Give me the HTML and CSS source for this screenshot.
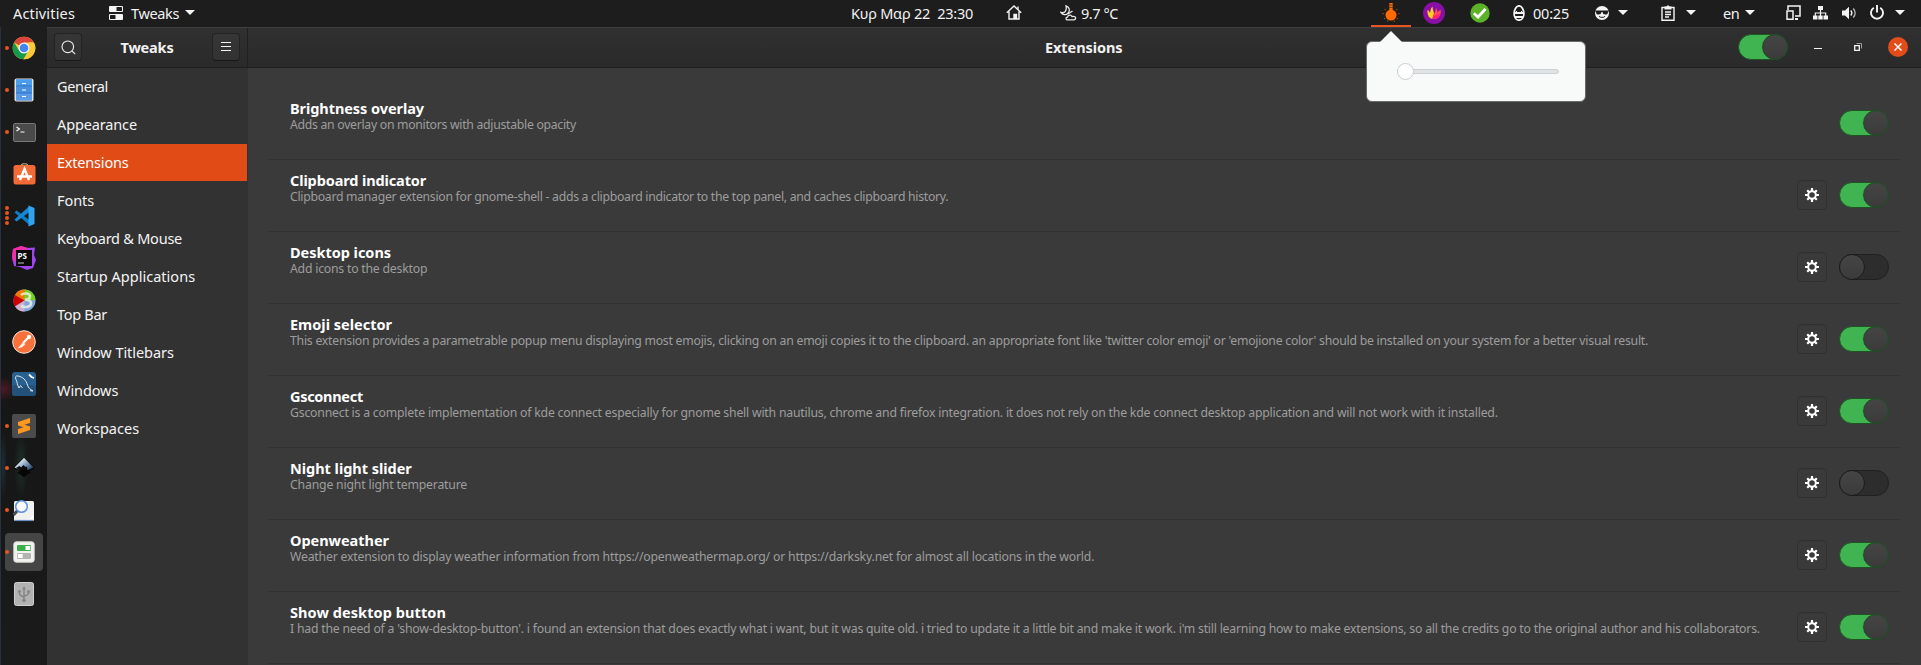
FILE: index.html
```html
<!DOCTYPE html>
<html lang="en">
<head>
<meta charset="utf-8">
<title>Tweaks</title>
<link rel="stylesheet" href="styles.css">
</head>
<body>
<svg class="defs" width="0" height="0">
  <symbol id="gear" viewBox="0 0 14 14">
    <g stroke="#fff" stroke-width="2.2"><path d="M7 0v3M7 11v3M0 7h3M11 7h3M2.2 2.2l2 2M9.8 9.8l2 2M2.2 11.8l2-2M9.8 4.2l2-2"/></g>
    <circle cx="7" cy="7" r="3.8" fill="none" stroke="#fff" stroke-width="2"/>
  </symbol>
</svg>

<header class="topbar">
  <div class="tb-left">
    <span class="activities">Activities</span>
    <svg class="ic-tweaks" width="14" height="14"><rect width="14" height="6" rx="1" fill="#f4f4f4"/><rect x="7.5" y="1" width="5.5" height="4" rx=".6" fill="#1d1d1d"/><rect y="8" width="14" height="6" rx="1" fill="#f4f4f4"/><rect x="1" y="9" width="5.5" height="4" rx=".6" fill="#1d1d1d"/></svg>
    <span class="app-name">Tweaks</span>
    <i class="caret"></i>
  </div>
  <div class="tb-mid">
    <span class="clock">Κυρ Μαρ 22&nbsp; 23:30</span>
    <svg class="ic-home" width="16" height="15" fill="none" stroke="#f4f4f4" stroke-width="1.4"><path d="M.8 7.8 8 1l7.200 6.800M3 6.500V14h10V6.500"/><path d="M12 1.500v3" /><path d="M8 14V9.500h2.500V14" fill="#f4f4f4"/></svg>
    <svg class="ic-weather" width="17" height="16" fill="none" stroke="#e8e8e8" stroke-width="1.3"><path d="M6 .8c4 1.500 4 5 2 7.500-2 2.200-5 1.700-7-.8 4 1 6-2 5-6.700z"/><path d="M7.500 14.800c-2 0-2-2.500 0-2.600.3-2.500 3.700-2.700 4.500-.6 2.500-.6 4 .5 3.600 1.900-.2.900-.8 1.300-1.800 1.300zM8 9l4.500-3"/></svg>
    <span class="temp">9.7 °C</span>
  </div>
  <div class="tb-right">
    <div class="indicator-active">
      <svg width="18" height="20" viewBox="0 0 18 20"><path d="M7.300 0h3.400v7c2.500.8 3.800 2.700 3.800 5a5.500 5.500 0 0 1-11 0c0-2.300 1.400-4.200 3.800-5z" fill="#ff6a00"/><path opacity=".55" fill="#ff6a00" d="M.5 10h1.300v1.300H.5zM16.200 10h1.300v1.300h-1.300zM2 15h1.300v1.300H2zM14.700 15H16v1.300h-1.300zM5 17.500h1.300v1.300H5zM11.700 17.500H13v1.300h-1.300zM2.500 6h1.300v1.300H2.500zM14.200 6h1.300v1.300h-1.300z"/><path d="M7 2h4M7 4.500h4" stroke="#7a3408" stroke-width=".8"/></svg>
    </div>
    <svg class="ic-purple" width="22" height="22" viewBox="0 0 22 22"><circle cx="11" cy="11" r="11" fill="#8a0fa6"/><path d="M4.500 8C6 8.500 6.500 10 7 11c.5-2 .5-4.500 2.500-6.500C9.500 7 10.500 9 11 11l-1 6C6.500 17 4 13 4.500 8z" fill="#ffcf1f"/><path d="M9.500 16.500c0-4 3-5 3.500-10.500 1.500 1.500 1.500 3 1.200 4.500C15.500 9.500 16 8.500 18 8c-.5 2.500 0 5-2.500 7.500-1.700 1.500-4 1.700-6 1z" fill="#ff4a5a"/><path d="M9 16.700c1-3 4-3.700 8-5-.5 3-3 5.800-8 5z" fill="#ff1f7c"/></svg>
    <svg class="ic-check" width="20" height="20" viewBox="0 0 20 20"><circle cx="10" cy="10" r="9.700" fill="#5cb327"/><path d="M3.800 10.300 8 14l7.500-8" fill="none" stroke="#fff" stroke-width="2.800"/></svg>
    <svg class="ic-egg" width="12" height="16" viewBox="0 0 12 16"><path d="M6 .8c3 0 4.900 4.500 4.900 8S9 15.200 6 15.200 1.100 12.300 1.100 8.800 3 .8 6 .8z" fill="none" stroke="#f4f4f4" stroke-width="1.700"/><path d="M1 8h10M2 12h8" stroke="#f4f4f4" stroke-width="1.800"/><path d="M3.500 6v2M8.500 6v2" stroke="#f4f4f4"/></svg>
    <span class="timer">00:25</span>
    <svg class="ic-ninja" width="14" height="14" viewBox="0 0 14 14"><circle cx="7" cy="7" r="7" fill="#f4f4f4"/><path d="M0 4.500h14v1h-1c0 2.500-.8 3-2.600 3S7.800 7.700 7.500 6h-1C6.200 7.700 5.400 8.500 3.600 8.500S1 8 1 5.500H0z" fill="#1d1d1d"/><path d="M4 10.500c2 1.200 4 1.200 6 0" stroke="#1d1d1d" fill="none"/></svg>
    <i class="caret c-ninja"></i>
    <svg class="ic-clip" width="14" height="16" viewBox="0 0 14 16"><path d="M1 2.500h12v12.700H1z" fill="none" stroke="#f4f4f4" stroke-width="1.400"/><path d="M3.500 1.500h2C5.500 0 8.500 0 8.500 1.500h2v3h-7z" fill="#f4f4f4"/><path d="M4 7h6M4 9.500h6M4 12h4" stroke="#f4f4f4" stroke-width="1.300"/></svg>
    <i class="caret c-clip"></i>
    <span class="lang">en</span>
    <i class="caret c-lang"></i>
    <svg class="ic-phone" width="15" height="15" viewBox="0 0 15 15" fill="none" stroke="#f4f4f4" stroke-width="1.500"><path d="M2 5V1h12v10H9"/><path d="M1 6h6v8.200H1z"/><path d="M9 14h3" stroke-width="2"/></svg>
    <svg class="ic-net" width="15" height="14" viewBox="0 0 15 14"><path d="M5 0h5v4H5zM0 9.500h4.500V13.500H0zM5.300 9.500h4.400V13.500H5.300zM10.500 9.500H15V13.500h-4.500z" fill="#f4f4f4"/><path d="M7.500 4v6M2.300 10V7h10.400v3" fill="none" stroke="#f4f4f4" stroke-width="1.200"/></svg>
    <svg class="ic-vol" width="15" height="14" viewBox="0 0 15 14"><path d="M0 4.500h3L7 .8v12.400L3 9.500H0z" fill="#f4f4f4"/><path d="M8.800 4.500c1.300 1.500 1.300 3.500 0 5" fill="none" stroke="#f4f4f4" stroke-width="1.300"/><path d="M11.200 2.500c2.600 2.600 2.600 6.400 0 9" fill="none" stroke="#bbb" stroke-width="1.300"/></svg>
    <svg class="ic-power" width="14" height="15" viewBox="0 0 14 15"><path d="M3.800 2.700a6 6 0 1 0 6.400 0M7 0v7.500" fill="none" stroke="#f4f4f4" stroke-width="1.900"/></svg>
    <i class="caret c-power"></i>
  </div>
</header>

<div class="desktop">
  <nav class="dock">
    <div class="app"><i class="dot"></i>
      <svg width="24" height="24" viewBox="0 0 24 24"><circle cx="12" cy="12" r="11.300" fill="#fbc934"/><path d="M12 12 2.200 6.400A11.300 11.300 0 0 1 21.800 6.400H12z" fill="#d9453a"/><path d="M2.200 6.400A11.300 11.300 0 0 0 11.500 23.300L16.500 14.700 7 14.600z" fill="#14994d"/><path d="M11.500 23.300 16.800 14.400V6.400h5A11.300 11.300 0 0 1 11.500 23.300z" fill="#fbc934"/><circle cx="12" cy="12" r="5.500" fill="#f5f5f5"/><circle cx="12" cy="12" r="4.300" fill="#4384f3"/></svg></div>
    <div class="app"><i class="dot"></i>
      <svg width="20" height="24" viewBox="0 0 20 24"><rect x=".5" y=".5" width="19" height="23" rx="2" fill="#e9e4dc"/><rect x="2" y="1.500" width="16" height="21" fill="#2f74c9"/><path d="M2 1.500h16v6H2z" fill="#4a9cec"/><path d="M2 8.500h16v6H2z" fill="#4790e2"/><path d="M2 15.500h16v6.500H2z" fill="#5a9be8"/><path d="M8 5.500h4M8 12h4M8 18.500h4" stroke="#fff"/></svg></div>
    <div class="app"><i class="dot"></i>
      <svg width="23" height="19" viewBox="0 0 23 19"><rect x=".5" y=".5" width="22" height="18" rx="1.500" fill="#4a4a4a" stroke="#777"/><path d="m3.500 4 3 2-3 2M7.500 9h4" fill="none" stroke="#fff" stroke-width="1.100"/></svg></div>
    <div class="app">
      <svg width="23" height="22" viewBox="0 0 23 22"><path d="M7.500 3c0-3 8-3 8 0" fill="none" stroke="#d8c8a0"/><rect x=".5" y="2" width="22" height="19.500" rx="2.500" fill="#f26a35"/><path d="m7 17 4.500-11L16 17M4 13.500h15" fill="none" stroke="#fff" stroke-width="2.400"/></svg></div>
    <div class="app"><span class="dots"><i></i><i></i><i></i><i></i></span>
      <svg width="22" height="22" viewBox="0 0 22 22"><path d="m1.500 7.500 15 12.500V15L3.500 5.500z" fill="#0c7cc4"/><path d="m1.500 14.500 2 2L16.500 7V1z" fill="#1787d2"/><path d="M15.500.5 21.500 3v16l-6 2.500z" fill="#2ea5ee"/></svg></div>
    <div class="app">
      <svg width="24" height="24" viewBox="0 0 24 24"><path d="M1 3 9 0l6 2 8-.5L22 9l2 5-3 8-6 2-7-3-6-1L0 12z" fill="#a046f0"/><path d="M1 3 9 0l7 2-4 5-10 9L0 10z" fill="#f12fa3"/><rect x="4" y="4" width="16" height="16" fill="#0b0b0b"/><path d="M6 17h6" stroke="#999" stroke-width="1.300"/><text class="ps" x="5.500" y="12.500">PS</text></svg></div>
    <div class="app">
      <svg width="23" height="23" viewBox="0 0 23 23"><circle cx="11.500" cy="11.500" r="11" fill="#7ea6d8"/><path d="M11.500 11.500 2 6A11 11 0 0 1 12 .5z" fill="#f57900"/><path d="M11.500 11.500 12 .5A11 11 0 0 1 22.500 11z" fill="#73d216"/><path d="M11.500 11.500 2 17.500a11 11 0 0 1 0-11.500z" fill="#cc0000"/><path d="M11.500 11.500V22.500A11 11 0 0 1 2 17.500z" fill="#cdafd0"/><path d="M8 6c3-2.500 9-1.800 9 1.200 0 2-2 3.200-5 3.400 3.500 0 6 1.500 6 4 0 3.500-6 4.500-10 2" fill="none" stroke="#eef3e8" stroke-width="2.600" opacity=".8"/></svg></div>
    <div class="app">
      <svg width="24" height="24" viewBox="0 0 24 24"><circle cx="12" cy="12" r="11.300" fill="#f9713a" stroke="#f4e4dc"/><path d="m5.500 18.500 5.500-6 2.500 1.500-3 3z" fill="#fff" opacity=".9"/><path d="m11 13 5-5" stroke="#fff" stroke-width="2.200"/><circle cx="17" cy="7" r="2.200" fill="#fff"/></svg></div>
    <div class="app">
      <svg width="24" height="24" viewBox="0 0 24 24"><rect width="24" height="24" rx="3" fill="#28608f"/><rect y="13" width="24" height="11" rx="3" fill="#22527a"/><path d="M7 16C5 13 5.500 10 4 7.500 3 5 3.500 3.500 6 4c5 1 8 4 9.500 9 .8 3 2.500 4 5.500 6l-3-.3M7 16l1.500-2.500L10.500 16" fill="none" stroke="#dfeaf3" stroke-width="1"/><path d="m17 2.500 2.500 2.500 2.500 1" fill="none" stroke="#fff" stroke-width="1.800"/></svg></div>
    <div class="app"><i class="dot"></i>
      <svg width="24" height="24" viewBox="0 0 24 24"><rect width="24" height="24" rx="2" fill="#4b4b4b"/><path d="M6 8 18 4v5l-5.500 1.800L18 12.500V16L6 20v-5l5.500-1.800L6 11.500z" fill="#ff981f"/></svg></div>
    <div class="app"><i class="dot"></i>
      <svg width="22" height="22" viewBox="0 0 22 22"><defs><linearGradient id="ink" x2="1" y2=".7"><stop offset=".2" stop-color="#fff"/><stop offset=".6" stop-color="#8fa8c6"/><stop offset="1" stop-color="#2a4a6c"/></linearGradient></defs><path d="M10 1q1-.9 2 0l9 9q1 1.500-1 2.200L16 14l2 1.500-4 2-3 3-3-2.500-4-2 3-2-5-1.800Q0 11.500 1 10z" fill="#060606"/><path d="m11 .8 9.500 9.700-5.500 2.500H7L1.500 10.500z" fill="url(#ink)"/><path d="m3 11 3.500-2 1.500 1.500L10.500 8l2 2 1.500-.5.500 3.500H7z" fill="#0a0a0a"/></svg></div>
    <div class="app"><i class="dot"></i>
      <svg width="24" height="24" viewBox="0 0 24 24"><rect x="2" y="3" width="20" height="20" rx="1.500" fill="#f1f1f0"/><path d="M3 22.500h18" stroke="#6a8fc4" stroke-width="1.200"/><path d="m17 21 4-4v4z" fill="#fff"/><path d="m5.500 12.500-4 4.500" stroke="#4b4b55" stroke-width="3"/><circle cx="9.500" cy="8.500" r="5.800" fill="#fafafa" stroke="#5b93dc" stroke-width="1.500"/></svg></div>
    <div class="app selected"><i class="dot"></i>
      <svg width="22" height="22" viewBox="0 0 22 22"><rect x=".8" y=".8" width="20.400" height="20.400" rx="2.500" fill="#f2f2f0" stroke="#d6d6d2"/><rect x="4" y="4" width="14" height="6" rx="1" fill="#3daf4a"/><rect x="12.500" y="5" width="4.800" height="4" fill="#fff"/><rect x="4" y="12" width="14" height="6" rx="1" fill="#b3b3b3"/><rect x="4.800" y="13" width="4.800" height="4" fill="#fff"/></svg></div>
    <div class="app">
      <svg width="20" height="24" viewBox="0 0 20 24"><rect x=".5" y=".5" width="19" height="23" rx="2" fill="#b2b2b2" stroke="#d0d0d0"/><path d="M10 6v12M5.500 9.500v2.500c0 2 4.500 2 4.500 4M14.500 9.500v2c0 2-4.500 1.500-4.500 3.500" fill="none" stroke="#858585" stroke-width="1.400"/><path d="m10 4 2 3.500H8z" fill="#858585"/><circle cx="10" cy="18.500" r="1.800" fill="#858585"/><circle cx="5.500" cy="9.500" r="1.400" fill="#858585"/><path d="M13.200 8.200h2.700v2.600h-2.700z" fill="#858585"/></svg></div>
  </nav>

  <main class="window">
    <div class="headerbar">
      <div class="hb-side">
        <span class="hb-btn"><svg width="15" height="15" viewBox="0 0 15 15" fill="none" stroke="#e6e6e6" stroke-width="1.200"><circle cx="6.800" cy="6.800" r="5.800"/><path d="m11 11 3.200 3.200"/></svg></span>
        <b class="hb-app">Tweaks</b>
        <span class="hb-btn"><svg width="10" height="10"><path d="M0 .5h10M0 4.500h10M0 8.500h10" stroke="#f4f4f4"/></svg></span>
      </div>
      <div class="hb-main">
        <b class="hb-title">Extensions</b>
        <span class="switch on hb-switch"><i></i></span>
        <svg class="win-min" width="8" height="2"><path d="M0 .5h8" stroke="#f4f4f4"/></svg>
        <svg class="win-max" width="8" height="8"><path d="M2.500 .5h5v5" fill="none" stroke="#9a9a9a"/><path d="M.700 2.700h4.600v4.600H.700z" fill="none" stroke="#f4f4f4" stroke-width="1.300"/></svg>
        <span class="win-close"><svg width="8" height="8"><path d="m.5.500 7 7m0-7-7 7" stroke="#fff" stroke-width="1.500"/></svg></span>
      </div>
    </div>

    <div class="body">
      <ul class="sidebar">
        <li>General</li><li>Appearance</li><li class="current">Extensions</li><li>Fonts</li><li>Keyboard &amp; Mouse</li><li>Startup Applications</li><li>Top Bar</li><li>Window Titlebars</li><li>Windows</li><li>Workspaces</li>
      </ul>
      <section class="list">
        <article><div class="txt"><h3>Brightness overlay</h3><p>Adds an overlay on monitors with adjustable opacity</p></div><span class="switch on"><i></i></span></article>
        <article><div class="txt"><h3>Clipboard indicator</h3><p>Clipboard manager extension for gnome-shell - adds a clipboard indicator to the top panel, and caches clipboard history.</p></div><span class="cog"><svg width="14" height="14"><use href="#gear"/></svg></span><span class="switch on"><i></i></span></article>
        <article><div class="txt"><h3>Desktop icons</h3><p>Add icons to the desktop</p></div><span class="cog"><svg width="14" height="14"><use href="#gear"/></svg></span><span class="switch"><i></i></span></article>
        <article><div class="txt"><h3>Emoji selector</h3><p>This extension provides a parametrable popup menu displaying most emojis, clicking on an emoji copies it to the clipboard. an appropriate font like 'twitter color emoji' or 'emojione color' should be installed on your system for a better visual result.</p></div><span class="cog"><svg width="14" height="14"><use href="#gear"/></svg></span><span class="switch on"><i></i></span></article>
        <article><div class="txt"><h3>Gsconnect</h3><p>Gsconnect is a complete implementation of kde connect especially for gnome shell with nautilus, chrome and firefox integration. it does not rely on the kde connect desktop application and will not work with it installed.</p></div><span class="cog"><svg width="14" height="14"><use href="#gear"/></svg></span><span class="switch on"><i></i></span></article>
        <article><div class="txt"><h3>Night light slider</h3><p>Change night light temperature</p></div><span class="cog"><svg width="14" height="14"><use href="#gear"/></svg></span><span class="switch"><i></i></span></article>
        <article><div class="txt"><h3>Openweather</h3><p>Weather extension to display weather information from https://openweathermap.org/ or https://darksky.net for almost all locations in the world.</p></div><span class="cog"><svg width="14" height="14"><use href="#gear"/></svg></span><span class="switch on"><i></i></span></article>
        <article><div class="txt"><h3>Show desktop button</h3><p>I had the need of a 'show-desktop-button'. i found an extension that does exactly what i want, but it was quite old. i tried to update it a little bit and make it work. i'm still learning how to make extensions, so all the credits go to the original author and his collaborators.</p></div><span class="cog"><svg width="14" height="14"><use href="#gear"/></svg></span><span class="switch on"><i></i></span></article>
      </section>
    </div>
  </main>
</div>

<div class="popup"><div class="slider"><i></i></div></div>
</body>
</html>
```
FILE: styles.css
```css
* { box-sizing: border-box; }
body {
  margin: 0;
  width: 1921px;
  height: 665px;
  overflow: hidden;
  position: relative;
  background: #1a1a1a;
  color: #f2f2f2;
  font: 14.5px/20px "Noto Sans", sans-serif;
}
svg { display: block; flex: none; }
.defs { position: absolute; }

/* Top panel */
.topbar {
  display: grid;
  grid-template-columns: 851px 520px 550px;
  height: 27px;
  background: #1d1d1d;
  white-space: nowrap;
}
.tb-left, .tb-mid, .tb-right {
  display: flex;
  align-items: center;
  height: 27px;
  padding-bottom: 2px;
}
.tb-left { padding-left: 13px; }
.tb-left > *, .tb-mid > *, .tb-right > * { flex: none; }
.caret {
  width: 10px;
  height: 5px;
  background: #f4f4f4;
  clip-path: polygon(0 0, 100% 0, 50% 100%);
}
.activities { width: 96px; letter-spacing: .16px; }
.app-name { margin-left: 8px; width: 54px; letter-spacing: -.36px; }
.clock { width: 155px; letter-spacing: -.23px; }
.ic-weather { margin-left: 38px; }
.temp { margin-left: 4px; letter-spacing: -.44px; }
.indicator-active {
  align-self: flex-start;
  width: 40px;
  height: 27px;
  padding: 3px 0 0 11px;
  border-bottom: 2px solid #e95420;
}
.ic-purple { margin-left: 12px; }
.ic-check { margin-left: 25px; }
.ic-egg { margin-left: 23px; }
.timer { margin-left: 8px; width: 62px; letter-spacing: -.2px; }
.c-ninja { margin-left: 9px; }
.ic-clip { margin-left: 33px; }
.c-clip { margin-left: 11px; }
.lang { margin-left: 27px; width: 22px; letter-spacing: -.5px; }
.ic-phone { margin-left: 31px; }
.ic-net { margin-left: 12px; }
.ic-vol { margin-left: 14px; }
.ic-power { margin-left: 13px; }
.c-power { margin-left: 11px; }

/* Dock */
.desktop { display: flex; height: 638px; }
.dock {
  width: 47px;
  padding: 2px 0 0 4px;
  border-left: 1px solid #28303d;
  background:
    radial-gradient(ellipse 14px 12px at 2px 362px, #4c1926, transparent 100%),
    radial-gradient(ellipse 7px 34px at 20px 438px, #1c3029, transparent),
    radial-gradient(ellipse 4px 34px at 2px 438px, #1a3036, transparent),
    linear-gradient(#1d1d1d, #171616 45%, #171717 70%, #1b1b1b);
}
.app {
  position: relative;
  display: flex;
  align-items: center;
  justify-content: center;
  width: 38px;
  height: 38px;
  margin-bottom: 4px;
  border-radius: 4px;
}
.app.selected { background: #454545; }
.dot, .dots i { width: 4px; height: 4px; border-radius: 50%; background: #e95420; }
.dot { position: absolute; left: 0; top: 17px; }
.dots {
  position: absolute;
  left: 0;
  top: 9px;
  display: grid;
  gap: 1px;
}
.ps { font: bold 8px "Noto Sans", sans-serif; fill: #fff; }

/* Window */
.window { width: 1874px; background: #3a3a3a; }
.headerbar {
  display: flex;
  height: 41px;
  background: linear-gradient(#303030, #2a2a2a);
  border-top: 1px solid #3f3f3f;
  border-bottom: 1px solid #1f1f1f;
}
.hb-side {
  display: flex;
  align-items: center;
  justify-content: space-between;
  width: 201px;
  padding: 0 7px 1px;
  border-right: 1px solid #202020;
}
.hb-btn {
  display: grid;
  place-items: center;
  width: 28px;
  height: 28px;
  background: linear-gradient(#363636, #323232);
  border: 1px solid #232323;
  border-bottom-color: #181818;
  border-radius: 4px;
}
.hb-app { letter-spacing: -.19px; }
.hb-main { display: flex; align-items: center; flex: 1; padding: 0 0 1px 797px; }
.hb-title { width: 693px; letter-spacing: -.08px; }
.hb-app, .hb-title { margin-top: -1px; }
.win-min { margin: 4px 0 0 26px; }
.win-max { margin-left: 32px; }
.win-close {
  display: grid;
  place-items: center;
  width: 20px;
  height: 20px;
  margin-left: 26px;
  border-radius: 50%;
  background: #e14c19;
}
.body { display: flex; height: 597px; }

/* Sidebar */
.sidebar {
  width: 201px;
  margin: 0;
  padding: 0 1px 0 0;
  list-style: none;
  background: #323232;
}
.sidebar li { height: 37px; margin-bottom: 1px; padding-left: 10px; line-height: 36px; color: #f4f4f4; }
.sidebar .current { background: #e04b16; color: #fff; letter-spacing: -.2px; }
.sidebar li:nth-child(1) { letter-spacing: -.35px; }
.sidebar li:nth-child(2) { letter-spacing: -.14px; }
.sidebar li:nth-child(4) { letter-spacing: -.08px; }
.sidebar li:nth-child(5) { letter-spacing: -.24px; }
.sidebar li:nth-child(6) { letter-spacing: .03px; }
.sidebar li:nth-child(7) { letter-spacing: -.3px; }
.sidebar li:nth-child(8) { letter-spacing: -.05px; }
.sidebar li:nth-child(9) { letter-spacing: -.1px; }
.sidebar li:nth-child(10) { letter-spacing: .05px; }

/* Extension rows */
.list { width: 1633px; margin: 20px 0 0 20px; }
article {
  display: flex;
  align-items: center;
  height: 72px;
  padding: 0 12px 0 22px;
  border-bottom: 1px solid #323232;
}
.txt { flex: 1; margin-top: -13px; white-space: nowrap; }
h3, p { margin: 0; }
h3 { margin: -1px 0 1px; font-size: 14.5px; line-height: 16px; color: #fff; }
p { font-size: 12.25px; line-height: 16px; color: #9d9d9d; }
.cog {
  display: grid;
  place-items: center;
  width: 30px;
  height: 30px;
  margin: -1px 12px 0 0;
  border: 1px solid #303030;
  border-radius: 4px;
}
.switch {
  display: flex;
  flex: none;
  width: 50px;
  height: 26px;
  border: 1px solid #202020;
  border-radius: 13px;
  background: #2d2d2d;
}
article .switch { margin-top: -1px; }
.switch i {
  flex: none;
  width: 26px;
  height: 26px;
  margin: -1px;
  border: 1px solid #1c1c1c;
  border-radius: 50%;
  background: linear-gradient(#454545, #3b3b3b);
}
.switch.on { justify-content: flex-end; border-color: #1e5427; background: #40b450; }
.switch.on i { border-color: #1e4a25; }

article:nth-child(1) h3 { letter-spacing: -.07px; }
article:nth-child(2) h3 { letter-spacing: -.12px; }
article:nth-child(3) h3 { letter-spacing: -.03px; }
article:nth-child(4) h3 { letter-spacing: 0; }
article:nth-child(5) h3 { letter-spacing: -.3px; }
article:nth-child(6) h3 { letter-spacing: -.03px; }
article:nth-child(7) h3 { letter-spacing: -.03px; }
article:nth-child(8) h3 { letter-spacing: .08px; }
article:nth-child(1) p { letter-spacing: -.29px; }
article:nth-child(2) p { letter-spacing: -.288px; }
article:nth-child(3) p { letter-spacing: -.22px; }
article:nth-child(4) p { letter-spacing: -.237px; }
article:nth-child(5) p { letter-spacing: -.203px; }
article:nth-child(6) p { letter-spacing: -.18px; }
article:nth-child(7) p { letter-spacing: -.193px; }
article:nth-child(8) p { letter-spacing: -.22px; }

/* Brightness popup */
.popup {
  position: absolute;
  left: 1366px;
  top: 41px;
  width: 220px;
  height: 61px;
  padding: 27px 26px 0 30px;
  background: #f8faf9;
  border: 1px solid #6a6a6a;
  border-radius: 6px;
}
.popup::before {
  content: "";
  position: absolute;
  left: 12px;
  top: -11px;
  width: 24px;
  height: 12px;
  background: #f8faf9;
  clip-path: polygon(0 100%, 50% 0, 100% 100%);
}
.slider {
  display: flex;
  align-items: center;
  height: 5px;
  border: 1px solid #ccd1d3;
  border-radius: 3px;
  background: #dfe3e4;
}
.slider i {
  flex: none;
  width: 17px;
  height: 17px;
  margin-left: -1px;
  border: 1px solid #c8cdd2;
  border-radius: 50%;
  background: #fff;
}
```
